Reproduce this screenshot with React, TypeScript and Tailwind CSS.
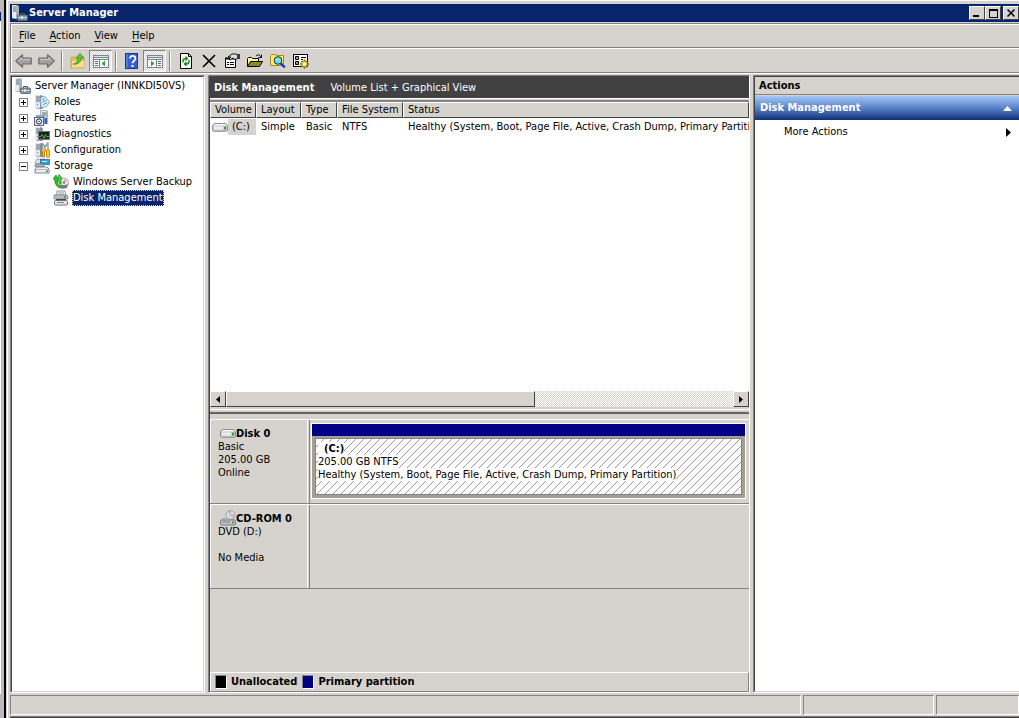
import type { ReactNode } from "react";
import { clsx } from "clsx";

function Icon({ children, className }: { children: ReactNode; className?: string }) {
  return (
    <svg viewBox="0 0 16 16" className={clsx("w-4 h-4 shrink-0", className)} aria-hidden="true">
      {children}
    </svg>
  );
}

function Tower() {
  return (
    <g>
      <path d="M1 1h6l2 1v13H3l-2-2z" fill="#9aa5ad" />
      <path d="M1 1h5v13H2l-1-1z" fill="#dfe6ea" />
      <path d="M2 3h4M2 5h4M2 7h4" stroke="#5b6b76" strokeWidth="1" />
      <path d="M7 2v13" stroke="#6d7b84" />
      <rect x="3" y="10" width="1" height="1" fill="#3fae3f" />
    </g>
  );
}

function ServerIcon() {
  return (
    <Icon>
      <path d="M0 0h5l2 1v13H2l-2-1z" fill="#a9b2b8" />
      <path d="M0 0h4v13H1l-1-1z" fill="#e6ecef" />
      <path d="M1 2h3M1 4h3M1 6h3" stroke="#56656f" />
      <path d="M8.500 10V8.500h4V10" fill="none" stroke="#4b565d" />
      <rect x="5.500" y="10" width="10" height="5.500" rx="1" fill="#8496a2" stroke="#4f5e68" strokeWidth="0.800" />
      <path d="M6 12.500h9" stroke="#c3d0d8" />
      <rect x="9" y="11.500" width="2" height="2" fill="#f3f5f6" />
    </Icon>
  );
}

function RolesIcon() {
  return (
    <Icon>
      <Tower />
      <path d="M6.500 4l4-2 5 6-3 4.500-5.500 1z" fill="#e4f1fb" stroke="#6fa3cb" strokeWidth="0.900" />
      <path d="M8 6l3-1.500M8.500 8l4-1.500M9 10.500l4-1.500" stroke="#4189c7" strokeWidth="0.900" />
    </Icon>
  );
}

function FeaturesIcon() {
  return (
    <Icon>
      <path d="M6 0h6l2 1v13H8l-2-2z" fill="#a9b5bd" />
      <path d="M7 1h5v8H7z" fill="#e4eaee" />
      <path d="M8 3h4M8 5h4" stroke="#5b6b76" />
      <path d="M2 5h9v3H2z" fill="#8fa6c8" />
      <rect x="0.500" y="7.500" width="9" height="8" fill="#e6e9ef" stroke="#5a6583" />
      <circle cx="5" cy="11.500" r="2.600" fill="#fff" stroke="#222" />
      <circle cx="5" cy="11.500" r="0.800" fill="#222" />
      <path d="M10.500 8H13v6h-2.500z" fill="#3467c4" />
    </Icon>
  );
}

function DiagnosticsIcon() {
  return (
    <Icon>
      <Tower />
      <rect x="4.500" y="5.500" width="11" height="8" fill="#17251a" stroke="#6b7478" />
      <path d="M5 10.500h2l1-2 2 3.500 1.500-3.500 1 2H15" fill="none" stroke="#49c242" strokeWidth="0.900" />
      <path d="M5 12.500h10" stroke="#8b3532" strokeWidth="0.600" />
    </Icon>
  );
}

function ConfigurationIcon() {
  return (
    <Icon>
      <Tower />
      <path d="M8 1l2.500 3v4M14 0.500L11.500 5" fill="none" stroke="#8d999f" strokeWidth="1.600" />
      <path d="M7.500 7v2l1 1v5h2v-5l1-1V7" fill="#f7bb23" stroke="#b97908" strokeWidth="0.800" />
      <path d="M14 1v6" stroke="#9ba5aa" strokeWidth="1.500" />
      <rect x="12.500" y="7.500" width="3" height="8" rx="1" fill="#ffc62e" stroke="#b97908" strokeWidth="0.800" />
    </Icon>
  );
}

function StorageIcon() {
  return (
    <Icon>
      <path d="M1 4l2-3h8v5H2z" fill="#dbe0e3" stroke="#7e8c94" strokeWidth="0.700" />
      <rect x="6.500" y="1.500" width="9" height="5" fill="#2f9fdc" stroke="#1f5f95" strokeWidth="0.700" />
      <path d="M8 3.500h5" stroke="#c9efff" />
      <rect x="1" y="6" width="9" height="3" rx="1" fill="#aeb8be" stroke="#5f6c74" strokeWidth="0.700" />
      <path d="M1 11l2-2h10l2 2v4H1z" fill="#e9edef" stroke="#68757c" strokeWidth="0.800" />
      <path d="M1 11.500h14" stroke="#9ba6ac" strokeWidth="0.700" />
      <rect x="12" y="12.500" width="2" height="1.500" fill="#26a526" />
    </Icon>
  );
}

function BackupIcon() {
  return (
    <Icon>
      <circle cx="11" cy="8.500" r="4.500" fill="#e8ebec" stroke="#8d9498" strokeWidth="0.800" />
      <path d="M11 4.500l3.500 2-3.500 2z" fill="#d8b8d8" />
      <circle cx="11" cy="8.500" r="1.300" fill="#c9605a" />
      <path d="M6 11l3 4 5-1 1-4-3 1z" fill="#777d80" />
      <path d="M0 5l3-4 2 4H4l1 5 3 4C4 14 2 10 1.500 5z" fill="#35bd33" stroke="#167e19" strokeWidth="0.700" />
      <path d="M6 0.500L9 4H8v6.500l-2-2L5 4z" fill="#4cd443" stroke="#167e19" strokeWidth="0.700" />
    </Icon>
  );
}

function DiskManagementIcon() {
  return (
    <Icon>
      <path d="M3 5l1-4h8l1 4z" fill="#f4f5f5" stroke="#7c8184" strokeWidth="0.800" />
      <path d="M1 5h13l1 2v2H1z" fill="#b9bdbf" stroke="#7c8184" strokeWidth="0.800" />
      <path d="M5 3h6" stroke="#9b9fa1" />
      <path d="M3 9.500h10" stroke="#44484a" />
      <rect x="1.500" y="10.500" width="13" height="4.500" rx="1" fill="#e3e5e6" stroke="#6e7477" />
      <path d="M4 12.500h7" stroke="#818688" />
      <rect x="11" y="6.500" width="2" height="1" fill="#444" />
    </Icon>
  );
}

function DriveIcon() {
  return (
    <Icon>
      <path d="M2.500 4.500h11l2 2v5l-1 .8h-13l-1-.8v-5z" fill="#c9c8cf" stroke="#85848b" strokeWidth="0.900" />
      <path d="M3 5h10l1.500 1.500h-13z" fill="#f7f6f9" />
      <path d="M2 9h9" stroke="#efeef3" strokeWidth="3" />
      <rect x="12" y="7.500" width="2" height="3" fill="#3fa037" />
    </Icon>
  );
}

function CdIcon() {
  return (
    <Icon>
      <circle cx="10.500" cy="5" r="4.500" fill="#dfe4e8" stroke="#8f8e96" strokeWidth="0.700" />
      <path d="M10.500 5L8 1.500A4 4 0 0 1 11 .8z" fill="#7fd28b" />
      <path d="M10.500 5l4-1.500a4 4 0 0 1-1.500 5z" fill="#d9a6d0" />
      <circle cx="10.500" cy="5" r="1.200" fill="#fff" stroke="#8f8e96" strokeWidth="0.600" />
      <path d="M3 8.500h6l5 1.500H1z" fill="#f3f3f5" stroke="#8b8a91" strokeWidth="0.600" />
      <rect x="0.500" y="10" width="15" height="5" rx="1" fill="#c5c4cb" stroke="#6b6a70" strokeWidth="0.800" />
      <path d="M2 12h8" stroke="#85848c" />
      <rect x="12" y="11.500" width="2" height="2" fill="#3fa037" />
    </Icon>
  );
}

function ArrowIcon({ flip }: { flip?: boolean }) {
  return (
    <svg viewBox="0 0 17 14" className={clsx("w-[17px] h-[14px]", flip && "-scale-x-100")} aria-hidden="true">
      <path d="M.8 7L7.500 .8v3.200h8.700v6H7.500v3.200z" fill="#a3a3a3" stroke="#6b6b6b" strokeWidth="1.200" strokeLinejoin="round" />
      <path d="M2.800 7L6.500 3.500V5.500h8.500" fill="none" stroke="#c6c6c6" />
    </svg>
  );
}

function UpFolderIcon() {
  return (
    <Icon>
      <path d="M1 5l1-1h4l1 1h7v10H1z" fill="#e9bd57" stroke="#c5963a" strokeWidth="0.700" />
      <path d="M2 8h12v6.500H2z" fill="#f9dc8d" />
      <path d="M3 11C6 11 8 8 8 5H6l4-4.500L14 5h-3c0 4-3 7-8 6z" fill="#5dc33e" stroke="#2f8a22" strokeWidth="0.700" />
    </Icon>
  );
}

function PaneIcon({ flip }: { flip?: boolean }) {
  return (
    <Icon className={clsx(flip && "-scale-x-100")}>
      <g shapeRendering="crispEdges">
        <rect x="0" y="2" width="16" height="13" fill="#7b8594" />
        <rect x="1" y="3" width="14" height="1" fill="#dfe3e8" />
        <rect x="1" y="5" width="14" height="1" fill="#e9ecef" />
        <rect x="1" y="7" width="5" height="7" fill="#fff" />
        <rect x="7" y="7" width="8" height="7" fill="#fff" />
        <path d="M2 8h3v1H2zM2 10h3v1H2zM2 12h3v1H2z" fill="#5c6c83" />
      </g>
      <path d="M12 7.500v6L8.500 10.500z" fill="#34a52c" />
    </Icon>
  );
}

function HelpIcon() {
  return (
    <Icon>
      <rect x="1.500" y="0.500" width="12" height="15" fill="#3460cf" stroke="#173991" />
      <path d="M3 1v14" stroke="#6d91e8" />
      <path d="M6 5.500C6 1.800 11.500 2 11.500 5.500c0 2.200-3 2.300-3 4.800" fill="none" stroke="#fff" strokeWidth="1.800" />
      <rect x="7.500" y="12" width="2" height="2" fill="#fff" />
    </Icon>
  );
}

function RefreshIcon() {
  return (
    <Icon>
      <path d="M2.500 .5h8l3 3v12h-11z" fill="#fff" stroke="#000" />
      <path d="M10.500 .5v3h3" fill="none" stroke="#000" />
      <path d="M5 9.500V8q0-2.500 3-2.500M11 7v1.500q0 2.500-3 2.500" fill="none" stroke="#138a18" strokeWidth="1.400" />
      <path d="M7.500 2.800l3 2.700-3 2.700zM8.500 8.300v5.400l-3-2.700z" fill="#138a18" />
    </Icon>
  );
}

function DeleteIcon() {
  return (
    <Icon>
      <path d="M2 2l12 12M14 2L2 14" stroke="#000" strokeWidth="1.700" />
    </Icon>
  );
}

function PropertiesIcon() {
  return (
    <Icon>
      <path d="M1.500 5.500h10v9h-10z" fill="#fff" stroke="#000" />
      <path d="M1 5.500h11" stroke="#000" strokeWidth="2" />
      <path d="M3 9.500h2M6 9.500h4M3 11.500h2M6 11.500h4" stroke="#000" />
      <path d="M4 4l4-3h4l2 1v3.500l-3 1-2-1.500-3 2-1-1 2-2H4z" fill="#dedede" stroke="#000" strokeWidth="0.900" />
      <path d="M13 1h3v5h-3z" fill="#333c58" />
    </Icon>
  );
}

function OpenFolderIcon() {
  return (
    <Icon>
      <path d="M.5 13.500v-8l1-1h3l1 1h6v3" fill="#fff799" stroke="#000" />
      <path d="M.5 13.500l3-5h12l-3 5z" fill="#8e8b18" stroke="#000" />
      <path d="M9 3c2-2 4-1 5 1M14.500 1.500v3h-3" fill="none" stroke="#000" />
    </Icon>
  );
}

function FindIcon() {
  return (
    <Icon>
      <path d="M.5 12.500V2.500l1-1h4l1 1h7v10z" fill="#ffea62" stroke="#a08d21" />
      <circle cx="8" cy="7.500" r="3.800" fill="#67e2f2" stroke="#20242c" />
      <path d="M6 7l2-2" stroke="#fff" />
      <path d="M10.800 10.300l4 4.200" stroke="#1b34c8" strokeWidth="2.400" />
    </Icon>
  );
}

function SettingsIcon() {
  return (
    <Icon>
      <rect x="0.500" y="1.500" width="14" height="12" fill="#fff" stroke="#000" />
      <path d="M2.500 3.500h3v3h-3zM2.500 8.500h3v3h-3z" fill="#999" stroke="#000" />
      <path d="M8 4.500h5M8 6.500h2" stroke="#000" />
      <path d="M11.500 6.500v9M7 11h9M8.500 8l6 6M14.500 8l-6 6" stroke="#65540b" strokeWidth="1.600" />
      <circle cx="11.500" cy="11" r="3" fill="#f2d535" stroke="#806c10" strokeWidth="0.600" />
      <circle cx="11.500" cy="11" r="1.200" fill="#fff" />
    </Icon>
  );
}

const menus = ["File", "Action", "View", "Help"];

const treeItems = [
  { label: "Roles", icon: RolesIcon },
  { label: "Features", icon: FeaturesIcon },
  { label: "Diagnostics", icon: DiagnosticsIcon },
  { label: "Configuration", icon: ConfigurationIcon },
  { label: "Storage", icon: StorageIcon, open: true },
];

const columns = ["Volume", "Layout", "Type", "File System", "Status"];

const sunken = "border border-t-[#848284] border-l-[#848284] border-b-white border-r-white";
const raised = "bg-[#d6d3ce] border border-t-white border-l-white border-b-[#424142] border-r-[#424142]";

function ToolButton({ label, pressed, children }: { label: string; pressed?: boolean; children: ReactNode }) {
  return (
    <button
      aria-label={label}
      className={clsx(
        "w-[23px] h-[22px] shrink-0 flex items-center justify-center",
        pressed && sunken,
        pressed && "bg-[repeating-conic-gradient(#fff_0_25%,#d6d3ce_0_50%)] bg-[length:2px_2px]"
      )}
    >
      {children}
    </button>
  );
}

function Separator() {
  return (
    <div className="w-2 h-5 flex justify-center">
      <div className="w-[2px] h-full bg-[#848284] border-r border-white" />
    </div>
  );
}

function TitleBar() {
  return (
    <header className="h-[18px] shrink-0 bg-[#08246b] flex items-center pl-[2px]">
      <ServerIcon />
      <h1 className="flex-1 text-white font-bold pl-[1px]">Server Manager</h1>
      <button aria-label="Minimize" className={clsx(raised, "w-4 h-[14px] flex items-end p-[2px]")}>
        <span className="block w-[6px] h-[2px] ml-[1px] bg-black" />
      </button>
      <button aria-label="Maximize" className={clsx(raised, "w-4 h-[14px] flex items-center justify-center mr-[2px]")}>
        <span className="block w-[9px] h-[9px] border border-t-2 border-black" />
      </button>
      <button aria-label="Close" className={clsx(raised, "w-4 h-[14px] flex items-center justify-center")}>
        <svg viewBox="0 0 8 8" className="w-2 h-2">
          <path d="M.5 .5l7 7M7.500 .5l-7 7" stroke="#000" strokeWidth="1.500" />
        </svg>
      </button>
    </header>
  );
}

function Toolbar() {
  return (
    <div className="h-6 shrink-0 flex items-center border-t border-l border-white">
      <ToolButton label="Back"><ArrowIcon /></ToolButton>
      <ToolButton label="Forward"><ArrowIcon flip /></ToolButton>
      <Separator />
      <ToolButton label="Up one level"><UpFolderIcon /></ToolButton>
      <ToolButton label="Show/Hide console tree" pressed><PaneIcon /></ToolButton>
      <Separator />
      <ToolButton label="Help"><HelpIcon /></ToolButton>
      <ToolButton label="Show/Hide action pane" pressed><PaneIcon flip /></ToolButton>
      <Separator />
      <ToolButton label="Refresh"><RefreshIcon /></ToolButton>
      <ToolButton label="Delete"><DeleteIcon /></ToolButton>
      <ToolButton label="Properties"><PropertiesIcon /></ToolButton>
      <ToolButton label="Open"><OpenFolderIcon /></ToolButton>
      <ToolButton label="Find"><FindIcon /></ToolButton>
      <ToolButton label="Settings"><SettingsIcon /></ToolButton>
    </div>
  );
}

function Expander({ open, label }: { open?: boolean; label: string }) {
  return (
    <button aria-label={label} className="w-[9px] h-[9px] mr-[6px] shrink-0 border border-[#848284] bg-white">
      <svg viewBox="0 0 7 7" className="w-[7px] h-[7px]" shapeRendering="crispEdges">
        <path d={open ? "M1 3h5v1H1z" : "M1 3h5v1H1zM3 1h1v5H3z"} fill="#000" />
      </svg>
    </button>
  );
}

function Tree() {
  return (
    <nav className={clsx(sunken, "w-[195px] shrink-0")}>
      <div className="h-full pt-[1px] bg-white border border-t-[#424142] border-l-[#424142] border-b-[#d6d3ce] border-r-[#d6d3ce]">
        <div className="h-4 flex items-center pl-[3px] whitespace-nowrap">
          <ServerIcon />
          <span className="pl-1">Server Manager (INNKDI50VS)</span>
        </div>
        <ul>
          {treeItems.map((item) => (
            <li key={item.label} className="h-4 flex items-center pl-[7px]">
              <Expander open={item.open} label={item.label} />
              <item.icon />
              <span className="pl-1">{item.label}</span>
            </li>
          ))}
          <li className="h-4 flex items-center pl-[41px] whitespace-nowrap">
            <BackupIcon />
            <span className="pl-1">Windows Server Backup</span>
          </li>
          <li className="h-4 flex items-center pl-[41px] whitespace-nowrap">
            <DiskManagementIcon />
            <span className="ml-[3px] h-4 leading-[14px] border border-dotted border-[#f7db94] bg-[#08246b] text-white">
              Disk Management
            </span>
          </li>
        </ul>
      </div>
    </nav>
  );
}

function VolumeList() {
  return (
    <section className="h-[307px] shrink-0 flex flex-col bg-white border-t-2 border-t-[#848284]">
      <div className="flex-1 min-h-0 overflow-hidden">
        <table className="w-full table-fixed border-separate border-spacing-0">
          <colgroup>
            <col className="w-[46px]" />
            <col className="w-[45px]" />
            <col className="w-9" />
            <col className="w-[66px]" />
            <col />
          </colgroup>
          <thead>
            <tr>
              {columns.map((c) => (
                <th key={c} className={clsx(raised, "h-4 p-0 pl-1 text-left font-normal whitespace-nowrap leading-[14px]")}>
                  {c}
                </th>
              ))}
            </tr>
          </thead>
          <tbody>
            <tr className="whitespace-nowrap">
              <td className="p-0 h-[18px]">
                <div className="flex items-center pl-[2px]">
                  <DriveIcon />
                  <span className="flex-1 h-4 pl-1 leading-4 bg-[#d6d3ce]">(C:)</span>
                </div>
              </td>
              <td className="p-0 pl-[5px]">Simple</td>
              <td className="p-0 pl-[5px]">Basic</td>
              <td className="p-0 pl-[5px]">NTFS</td>
              <td className="p-0 pl-[5px] overflow-hidden">
                Healthy (System, Boot, Page File, Active, Crash Dump, Primary Partition)
              </td>
            </tr>
          </tbody>
        </table>
      </div>
      <div className="h-4 shrink-0 flex bg-[repeating-conic-gradient(#fff_0_25%,#d6d3ce_0_50%)] bg-[length:2px_2px]">
        <button aria-label="Scroll left" className={clsx(raised, "w-4 flex items-center justify-center")}>
          <svg viewBox="0 0 4 7" className="w-1 h-[7px]"><path d="M4 0v7L0 3.500z" /></svg>
        </button>
        <div className="flex-1 flex">
          <div className={clsx(raised, "w-[61%]")} />
        </div>
        <button aria-label="Scroll right" className={clsx(raised, "w-4 flex items-center justify-center")}>
          <svg viewBox="0 0 4 7" className="w-1 h-[7px]"><path d="M0 0v7l4-3.500z" /></svg>
        </button>
      </div>
    </section>
  );
}

function DiskRow({ icon, name, lines, children }: { icon: ReactNode; name: string; lines: string[]; children?: ReactNode }) {
  return (
    <div className="h-[85px] shrink-0 flex border-t border-t-white border-b border-b-[#848284]">
      <div className="w-[98px] shrink-0 pl-[7px] pt-[6px] border-l border-r border-white leading-[13px]">
        <h3 className="h-[14px] flex items-center font-bold pl-[2px] whitespace-nowrap">
          {icon}
          {name}
        </h3>
        {lines.map((line, i) => (
          <p key={i} className="h-[13px]">{line}</p>
        ))}
      </div>
      <div className="flex-1 min-w-0 flex border-l border-[#848284] ml-[1px] pl-[1px] pr-[3px] pt-[3px] pb-1">
        {children}
      </div>
    </div>
  );
}

function Partition() {
  return (
    <div className="flex-1 flex flex-col border border-white">
      <div className="h-3 shrink-0 bg-[#000084]" />
      <div className="flex-1 flex bg-[#a59e94] p-[3px] pt-[2px]">
        <div className="flex-1 relative border border-[#848284] bg-white overflow-hidden">
          <svg className="absolute inset-0 w-full h-full" aria-hidden="true">
            <defs>
              <pattern id="hatch" width="8" height="8" patternUnits="userSpaceOnUse">
                <path
                  d="M7 0h1v1H7zM6 1h1v1H6zM5 2h1v1H5zM4 3h1v1H4zM3 4h1v1H3zM2 5h1v1H2zM1 6h1v1H1zM0 7h1v1H0z"
                  fill="#9c9a9c"
                  shapeRendering="crispEdges"
                />
              </pattern>
            </defs>
            <rect width="100%" height="100%" fill="url(#hatch)" />
          </svg>
          <div className="relative flex flex-col items-start pl-[2px] pt-[3px] leading-[13px] whitespace-nowrap">
            <span className="bg-white font-bold pl-[6px]">(C:)</span>
            <span className="bg-white">205.00 GB NTFS</span>
            <span className="bg-white">Healthy (System, Boot, Page File, Active, Crash Dump, Primary Partition)</span>
          </div>
        </div>
      </div>
    </div>
  );
}

function DiskManagement() {
  return (
    <main className={clsx(sunken, "flex-1 min-w-0 flex flex-col")}>
      <div className="flex-1 min-h-0 flex flex-col border-l border-[#424142]">
        <div className="h-[22px] shrink-0 flex items-center pt-[2px] pl-1 bg-[#424142] text-white whitespace-nowrap">
          <h2 className="font-bold">Disk Management</h2>
          <span className="pl-4">Volume List + Graphical View</span>
        </div>
        <div className="h-[2px] shrink-0 border-t border-white" />
        <VolumeList />
        <div className="h-[5px] mt-[2px] shrink-0 border-t border-t-white border-b-2 border-b-[#636163]" />
        <div className="mt-[5px] shrink-0">
          <DiskRow icon={<DriveIcon />} name="Disk 0" lines={["Basic", "205.00 GB", "Online"]}>
            <Partition />
          </DiskRow>
          <DiskRow icon={<CdIcon />} name="CD-ROM 0" lines={["DVD (D:)", "", "No Media"]} />
        </div>
        <footer className="mt-auto h-5 shrink-0 flex items-center pl-1 border border-t-white border-l-white border-b-[#848284] border-r-[#848284] font-bold">
          <span className={clsx(sunken, "w-3 h-[14px] bg-black")} />
          <span className="pl-1">Unallocated</span>
          <span className={clsx(sunken, "w-3 h-[14px] ml-[5px] bg-[#000084]")} />
          <span className="pl-1">Primary partition</span>
        </footer>
      </div>
    </main>
  );
}

function Actions() {
  return (
    <aside className="w-[266px] shrink-0 border-t border-l border-b border-t-[#848284] border-l-[#848284] border-b-white">
      <div className="h-full bg-white border-t border-l border-b border-t-[#424142] border-l-[#424142] border-b-[#d6d3ce]">
        <h2 className="h-[18px] flex items-center pl-1 font-bold bg-[#d6d3ce] border-b border-[#848284]">Actions</h2>
        <button className="w-full h-[25px] flex items-center justify-between pl-[5px] pr-[7px] font-bold text-white border-t border-[#d6d3ce] bg-linear-to-b from-[#a5c7f7] via-[#5a82c6] to-[#10307b]">
          Disk Management
          <svg viewBox="0 0 9 5" className="w-[9px] h-[5px]"><path d="M4.500 0L9 5H0z" fill="#fff" /></svg>
        </button>
        <button className="w-full h-6 flex items-center justify-between pl-[29px] pr-2">
          More Actions
          <svg viewBox="0 0 5 9" className="w-[5px] h-[9px]"><path d="M0 0v9l5-4.500z" /></svg>
        </button>
      </div>
    </aside>
  );
}

export default function App() {
  return (
    <div className="h-screen w-full flex overflow-hidden bg-[#d6d3ce] text-black text-[11px] leading-[14px] font-['DejaVu_Sans_Condensed','DejaVu_Sans',sans-serif]">
      {/* Edge of the window behind */}
      <div className="w-[6px] shrink-0 flex flex-col pt-3 border-r-2 border-black bg-[#bdbabd]">
        <div className="w-[1px] h-[9px] bg-[#08246b]" />
        <div className="w-[1px] flex-1 bg-white" />
        <div className="h-6" />
      </div>

      <div className="flex-1 min-w-0 flex flex-col ml-[1px] pt-[2px] pl-[2px] border-t border-l border-t-white border-l-white">
        <div className="flex-1 min-h-0 flex flex-col pt-[1px]">
          <TitleBar />
          <div className="h-[2px] shrink-0 border-b border-[#848284]" />
          <div className="shrink-0 flex flex-col border-l border-[#848284]">
            <div className="h-6 flex items-center border-t border-l border-white border-b border-b-[#848284]">
              {menus.map((m) => (
                <button key={m} className="px-[7px]">
                  <span className="underline underline-offset-2">{m[0]}</span>
                  {m.slice(1)}
                </button>
              ))}
            </div>
            <Toolbar />
          </div>
          <div className="h-[3px] shrink-0 border-t border-[#848284] shadow-[inset_0_1px_#fff]" />
          <div className="flex-1 min-h-0 flex gap-[3px]">
            <Tree />
            <DiskManagement />
            <Actions />
          </div>
          <div className="h-5 mt-[2px] mb-[1px] shrink-0 flex gap-[2px]">
            <div className={clsx(sunken, "flex-1")} />
            <div className={clsx(sunken, "w-[131px]")} />
            <div className={clsx(sunken, "w-[83px]")} />
          </div>
          <div className="h-[2px] shrink-0 bg-[#424142] border-t border-[#848284]" />
        </div>
      </div>
    </div>
  );
}
